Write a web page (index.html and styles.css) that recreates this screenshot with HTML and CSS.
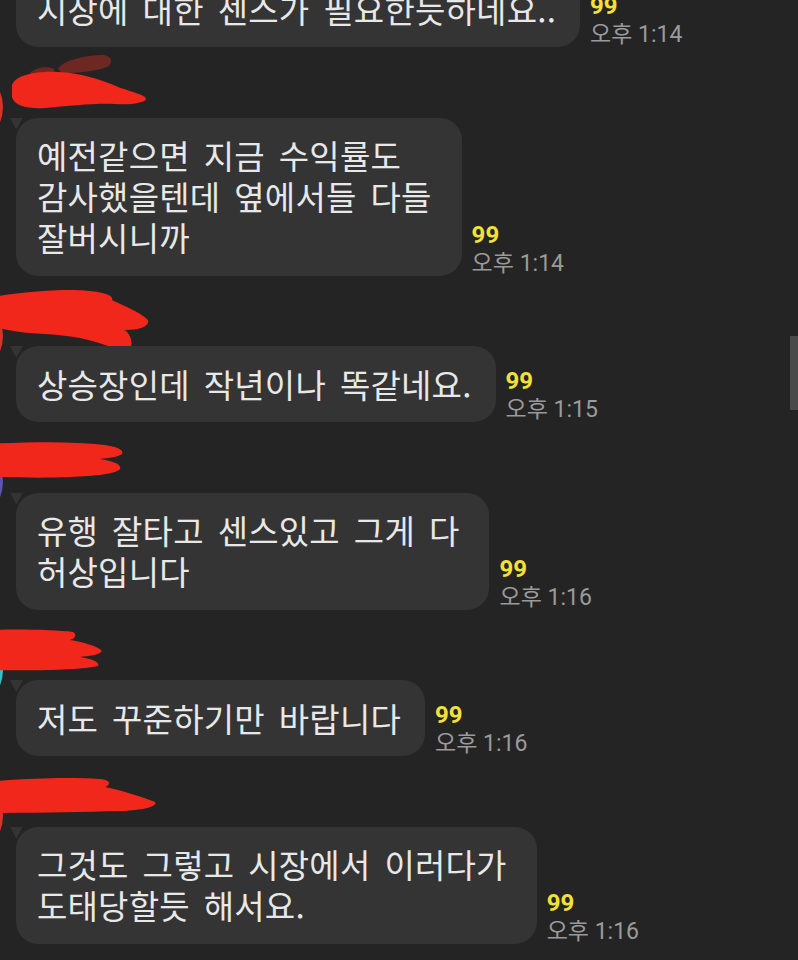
FILE: index.html
```html
<!DOCTYPE html>
<html lang="ko">
<head>
<meta charset="utf-8">
<title>채팅</title>
<link rel="stylesheet" href="styles.css">
</head>
<body>
<div class="chat">

  <div class="msg first">
    <div class="avatar hidden"></div>
    <div class="body">
      <div class="line">
        <div class="bubble plain">시장에 대한 센스가 필요한듯하네요..</div>
        <div class="meta"><span class="unread">99</span><span class="time">오후 1:14</span></div>
      </div>
    </div>
  </div>

  <div class="msg">
    <div class="avatar red"></div>
    <div class="body">
      <div class="name">
        <svg class="scribble" width="170" height="57" viewBox="0 0 170 57">
          <path class="dark" d="M58,8 C62,0 82,-5 100,-6 C112,-7 114,2 107,6 C96,10 80,12 62,12 Z"/>
          <path class="dark" d="M30,12 C36,6 48,5 54,8 C55,12 48,16 36,17 Z"/>
          <path d="M12,24 C16,14 36,10 58,11 C80,12 100,18 118,26 C132,31 146,34 146,38 C145,42 130,44 115,43 C95,42 70,45 45,47 C28,48 14,45 12,36 Z"/>
        </svg>
      </div>
      <div class="line">
        <div class="bubble wide">예전같으면 지금 수익률도<br>감사했을텐데 옆에서들 다들<br>잘버시니까</div>
        <div class="meta"><span class="unread">99</span><span class="time">오후 1:14</span></div>
      </div>
    </div>
  </div>

  <div class="msg">
    <div class="avatar red"></div>
    <div class="body">
      <div class="name">
        <svg class="scribble" width="170" height="57" viewBox="0 0 170 57">
          <path d="M-16,8 C10,4 40,0 70,0 C95,0 115,4 112,10 C120,14 140,22 148,30 C150,36 140,40 125,40 C132,46 134,56 128,60 C115,60 100,52 80,48 C60,44 35,44 20,42 C8,40 -16,36 -16,30 Z"/>
        </svg>
      </div>
      <div class="line">
        <div class="bubble">상승장인데 작년이나 똑같네요.</div>
        <div class="meta"><span class="unread">99</span><span class="time">오후 1:15</span></div>
      </div>
    </div>
  </div>

  <div class="msg">
    <div class="avatar purple"></div>
    <div class="body">
      <div class="name">
        <svg class="scribble" width="170" height="57" viewBox="0 0 170 57">
          <path d="M-16,8 C30,6 70,5 105,9 C118,11 124,14 122,18 C118,21 108,22 100,23 C112,25 122,28 120,33 C116,38 95,40 70,41 C45,42 20,42 -16,40 Z"/>
        </svg>
      </div>
      <div class="line">
        <div class="bubble wide">유행 잘타고 센스있고 그게 다<br>허상입니다</div>
        <div class="meta"><span class="unread">99</span><span class="time">오후 1:16</span></div>
      </div>
    </div>
  </div>

  <div class="msg">
    <div class="avatar cyan"></div>
    <div class="body">
      <div class="name">
        <svg class="scribble" width="170" height="57" viewBox="0 0 170 57">
          <path d="M-16,6 C25,5 55,6 73,8 C77,10 76,14 70,16 C82,18 98,22 102,27 C100,31 88,32 80,33 C92,35 100,38 98,42 C80,46 40,47 -16,46 Z"/>
        </svg>
      </div>
      <div class="line">
        <div class="bubble">저도 꾸준하기만 바랍니다</div>
        <div class="meta"><span class="unread">99</span><span class="time">오후 1:16</span></div>
      </div>
    </div>
  </div>

  <div class="msg">
    <div class="avatar red"></div>
    <div class="body">
      <div class="name">
        <svg class="scribble" width="170" height="57" viewBox="0 0 170 57">
          <path d="M-16,12 C30,8 70,7 100,9 C110,10 112,14 105,17 C120,20 140,26 155,32 C158,36 145,40 120,41 C80,42 40,43 -16,43 Z"/>
        </svg>
      </div>
      <div class="line">
        <div class="bubble wide">그것도 그렇고 시장에서 이러다가<br>도태당할듯 해서요.</div>
        <div class="meta"><span class="unread">99</span><span class="time">오후 1:16</span></div>
      </div>
    </div>
  </div>

</div>
<div class="scrollbar"></div>
</body>
</html>
```

FILE: styles.css
```css
html, body {
  margin: 0;
  padding: 0;
  background: #242424;
  overflow: hidden;
}

body {
  width: 798px;
  height: 960px;
  position: relative;
  font-family: "Noto Sans CJK KR", "Noto Sans", sans-serif;
}

.chat {
  display: flex;
  flex-direction: column;
}

.msg {
  display: flex;
  align-items: flex-start;
  margin-top: 14px;
}

.msg.first {
  margin-top: -29px;
}

.avatar {
  flex: none;
  width: 84px;
  height: 84px;
  border-radius: 50%;
  margin-left: -81px;
  margin-right: 13px;
  margin-top: 4px;
}

.avatar.hidden { visibility: hidden; height: 0; }
.avatar.red { background: #d8322a; }
.avatar.purple { background: #5d52b0; }
.avatar.cyan { background: #34c3c4; }

.body {
  flex: 1;
  display: flex;
  flex-direction: column;
}

.name {
  height: 56.5px;
  margin-left: -16px;
}

.scribble {
  display: block;
  overflow: visible;
}

.scribble path {
  fill: #f2271b;
}

.scribble path.dark {
  fill: #6e2823;
}

.line {
  display: flex;
  align-items: flex-end;
  gap: 10px;
}

.bubble {
  position: relative;
  background: #343434;
  color: #e8e8e8;
  border-radius: 22px;
  padding: 17.5px 24px 17.5px 21px;
  font-size: 33px;
  line-height: 41px;
  letter-spacing: 0.2px;
  word-spacing: 4.5px;
  white-space: nowrap;
}

.bubble.wide {
  padding-right: 30px;
}

.bubble::before {
  content: "";
  position: absolute;
  left: -6px;
  top: 0;
  width: 13px;
  height: 12px;
  background: #343434;
  clip-path: polygon(0 0, 100% 0, 48% 100%);
}

.bubble.plain::before {
  display: none;
}

.meta {
  flex: none;
  display: flex;
  flex-direction: column;
  align-items: flex-start;
}

.unread {
  font-family: Roboto, "Liberation Sans", sans-serif;
  font-weight: 700;
  font-size: 24px;
  line-height: 24px;
  color: #f3e03a;
}

.time {
  margin-top: 5px;
  font-family: Roboto, "Noto Sans CJK KR", sans-serif;
  font-size: 23px;
  line-height: 24px;
  color: #9b9b9b;
  white-space: nowrap;
}

.scrollbar {
  position: absolute;
  right: 0;
  top: 336px;
  width: 8px;
  height: 74px;
  background: #4a4a4a;
}
```
